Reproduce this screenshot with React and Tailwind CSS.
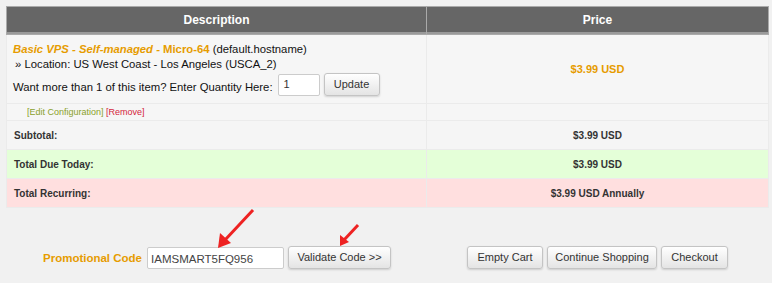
import React from 'react'

const font = { fontFamily: '"Liberation Sans", Arial, sans-serif' }

const Btn = ({ children, className = '' }) => (
  <button
    className={`h-[23px] px-0 whitespace-nowrap rounded-[3px] border border-[#c4c4c4] bg-gradient-to-b from-[#ffffff] to-[#e4e4e4] text-[11px] text-[#333] shadow-[0_1px_2px_rgba(0,0,0,0.15)] leading-none ${className}`}
  >
    {children}
  </button>
)

const TotalRow = ({ label, value, bg }) => (
  <tr className={bg}>
    <td className="h-[28px] pl-[7px] text-[10px] font-bold text-[#333]">{label}</td>
    <td className="h-[28px] text-center text-[10px] font-bold text-[#333]">{value}</td>
  </tr>
)

export default function App() {
  return (
    <div style={font} className="relative w-[772px] h-[283px] bg-[#f1f1f1] pt-[6px] overflow-hidden">
      <table className="ml-[6px] w-[763px] border-separate border-spacing-[1px] bg-[#ebebeb]">
        <thead>
          <tr>
            <th className="w-[419px] h-[27px] bg-[#666666] border-b-[2px] border-[#9a9a9a] outline outline-1 outline-[#aaa] text-white text-[12px] font-bold">
              Description
            </th>
            <th className="h-[27px] bg-[#666666] border-b-[2px] border-[#9a9a9a] outline outline-1 outline-[#aaa] text-white text-[12px] font-bold">
              Price
            </th>
          </tr>
        </thead>
        <tbody>
          <tr className="bg-[#f6f6f6]">
            <td className="h-[68px] pl-[6px] align-top pt-[7px] text-[11.3px] text-[#111] leading-[15px]">
              <div>
                <span className="italic font-bold text-[#e69c00]">Basic VPS - Self-managed -</span>{' '}
                <span className="font-bold text-[#e69c00]">Micro-64</span> (default.hostname)
              </div>
              <div className="pl-[2px]">» Location: US West Coast - Los Angeles (USCA_2)</div>
              <div className="flex items-center gap-[4px] mt-[1px]">
                <span className="mt-[5px]">Want more than 1 of this item? Enter Quantity Here:</span>
                <div className="ml-[1px] w-[42px] h-[22px] bg-white border border-[#ccc] rounded-[2px] text-[11px] pl-[5px] pt-[2px] text-[#333]">1</div>
                <Btn className="w-[56px]">Update</Btn>
              </div>
            </td>
            <td className="h-[68px] text-center text-[11px] font-bold text-[#e69c00]">$3.99 USD</td>
          </tr>
          <tr className="bg-[#f6f6f6]">
            <td className="h-[16px] pl-[20px] text-[9px] leading-none">
              <span className="text-[#8aa12a]">[Edit Configuration]</span>{' '}
              <span className="text-[#d4243c]">[Remove]</span>
            </td>
            <td className="h-[16px]"></td>
          </tr>
          <TotalRow label="Subtotal:" value="$3.99 USD" bg="bg-[#f5f5f5]" />
          <TotalRow label="Total Due Today:" value="$3.99 USD" bg="bg-[#e4ffd8]" />
          <TotalRow label="Total Recurring:" value="$3.99 USD Annually" bg="bg-[#ffdfdf]" />
        </tbody>
      </table>

      <div className="ml-[6px] w-[763px] flex mt-[38px]">
        <div className="w-[420px] flex items-center justify-center gap-[4px] pl-[2px]">
          <span className="text-[11.5px] font-bold text-[#e69c00] mr-[1px] mt-[3px]">Promotional Code</span>
          <div className="w-[137px] h-[22px] bg-white border border-[#ccc] rounded-[2px] text-[11.5px] pl-[3px] pt-[3px] text-[#444]">
            IAMSMART5FQ956
          </div>
          <Btn className="w-[103px]">Validate Code &gt;&gt;</Btn>
        </div>
        <div className="flex-1 flex items-center justify-center gap-[4px]">
          <Btn className="w-[76px]">Empty Cart</Btn>
          <Btn className="w-[110px]">Continue Shopping</Btn>
          <Btn className="w-[67px]">Checkout</Btn>
        </div>
      </div>

      <svg className="absolute left-0 top-0 pointer-events-none" width="772" height="283">
        <line x1="253" y1="210" x2="225" y2="240" stroke="#ee2222" strokeWidth="3" />
        <polygon points="218,248 220,233 231,243" fill="#ee2222" />
        <line x1="358" y1="225" x2="344" y2="240" stroke="#ee2222" strokeWidth="3" />
        <polygon points="340,246 340,235 349,242" fill="#ee2222" />
      </svg>
    </div>
  )
}
